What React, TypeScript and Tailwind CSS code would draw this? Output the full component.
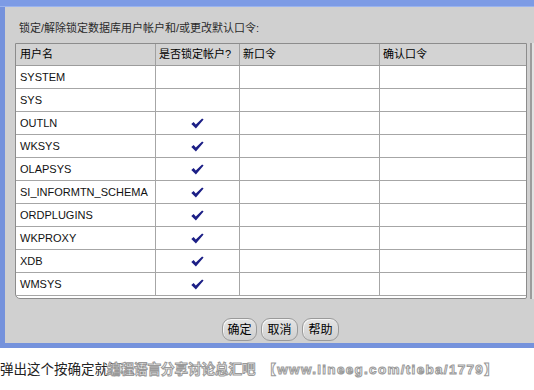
import React from "react";

const rows: { name: string; locked: boolean }[] = [
  { name: "SYSTEM", locked: false },
  { name: "SYS", locked: false },
  { name: "OUTLN", locked: true },
  { name: "WKSYS", locked: true },
  { name: "OLAPSYS", locked: true },
  { name: "SI_INFORMTN_SCHEMA", locked: true },
  { name: "ORDPLUGINS", locked: true },
  { name: "WKPROXY", locked: true },
  { name: "XDB", locked: true },
  { name: "WMSYS", locked: true },
];

function Check() {
  return (
    <svg width="13" height="11" viewBox="0 0 13 11">
      <path d="M0.3 5.9 L2.6 4.1 L4.8 6.4 L11.1 0.4 L12.6 1.6 L4.9 10.4 Z" fill="#1c1f86" />
    </svg>
  );
}

function Btn({ label, w }: { label: string; w: string }) {
  return (
    <div
      className={`${w} h-[23px] rounded-[9px] border border-[#9a9a9a] bg-gradient-to-b from-[#e4e4e4] to-[#cfcfcf] flex items-center justify-center text-[12px] text-black shadow-[inset_1px_1px_0_#f4f4f4]`}
    >
      {label}
    </div>
  );
}

export default function App() {
  return (
    <div
      className="relative w-[534px] h-[390px] bg-white overflow-hidden"
      style={{ fontFamily: '"Liberation Sans", "Noto Sans CJK SC", sans-serif' }}
    >
      {/* dialog */}
      <div className="h-[348px] flex flex-col">
        <div className="h-[7px] bg-[#7d9be5] border-b border-[#9ab3ee]" />
        <div className="flex-1 flex border-l-[5px] border-b-[5px] border-[#7592dc] bg-[#d0d0d0]">
          <div className="flex-1 flex flex-col pl-[10px]">
            <div className="h-[36px] flex items-end pb-[7px] pl-[4px] text-[11px] text-[#2a2a2a]">
              锁定/解除锁定数据库用户帐户和/或更改默认口令:
            </div>
            <div className="flex">
              <div className="w-[512px] h-[256px] border border-[#8c8c8c] rounded-bl-[5px] rounded-br-[2px] bg-white overflow-hidden">
                <div className="grid grid-cols-[140px_84px_140px_146px] h-[22px] bg-[#d3d3d3] border-b border-[#9c9c9c] text-[11px] text-black">
                  <div className="border-r border-[#a0a0a0] flex items-center pl-[4px]">用户名</div>
                  <div className="border-r border-[#a0a0a0] flex items-center pl-[3px]">是否锁定帐户?</div>
                  <div className="border-r border-[#a0a0a0] flex items-center pl-[3px]">新口令</div>
                  <div className="flex items-center pl-[3px]">确认口令</div>
                </div>
                {rows.map((r) => (
                  <div
                    key={r.name}
                    className="grid grid-cols-[140px_84px_140px_146px] h-[23px] border-b border-[#a6a6a6] text-[11px] text-[#111]"
                  >
                    <div className="border-r border-[#a6a6a6] flex items-center pl-[4px]">{r.name}</div>
                    <div className="border-r border-[#a6a6a6] flex items-center justify-center">
                      {r.locked ? <Check /> : null}
                    </div>
                    <div className="border-r border-[#a6a6a6]" />
                    <div />
                  </div>
                ))}
              </div>
              <div className="w-[3px]" />
              <div className="w-[2px] h-[256px] bg-[#9c9c9c]" />
              <div className="flex-1 h-[256px] bg-[#e2e2e2]" />
            </div>
            <div className="flex justify-start gap-[4px] mt-[19px] ml-[207px]">
              <Btn label="确定" w="w-[35px]" />
              <Btn label="取消" w="w-[37px]" />
              <Btn label="帮助" w="w-[37px]" />
            </div>
          </div>
        </div>
      </div>

      {/* caption */}
      <div className="mt-[13px] text-[13.5px] leading-[18px] text-[#222]">弹出这个按确定就可以了</div>

      {/* watermark */}
      <div
        className="absolute left-[107px] top-[361px] flex items-center gap-[7px] text-[13.5px] font-bold leading-[18px] text-white [-webkit-text-stroke:1px_#9a9a9a]"
      >
        <span>编程语言分享讨论总汇吧</span>
        <span className="tracking-[1.3px]">【www.lineeg.com/tieba/1779】</span>
      </div>
    </div>
  );
}
